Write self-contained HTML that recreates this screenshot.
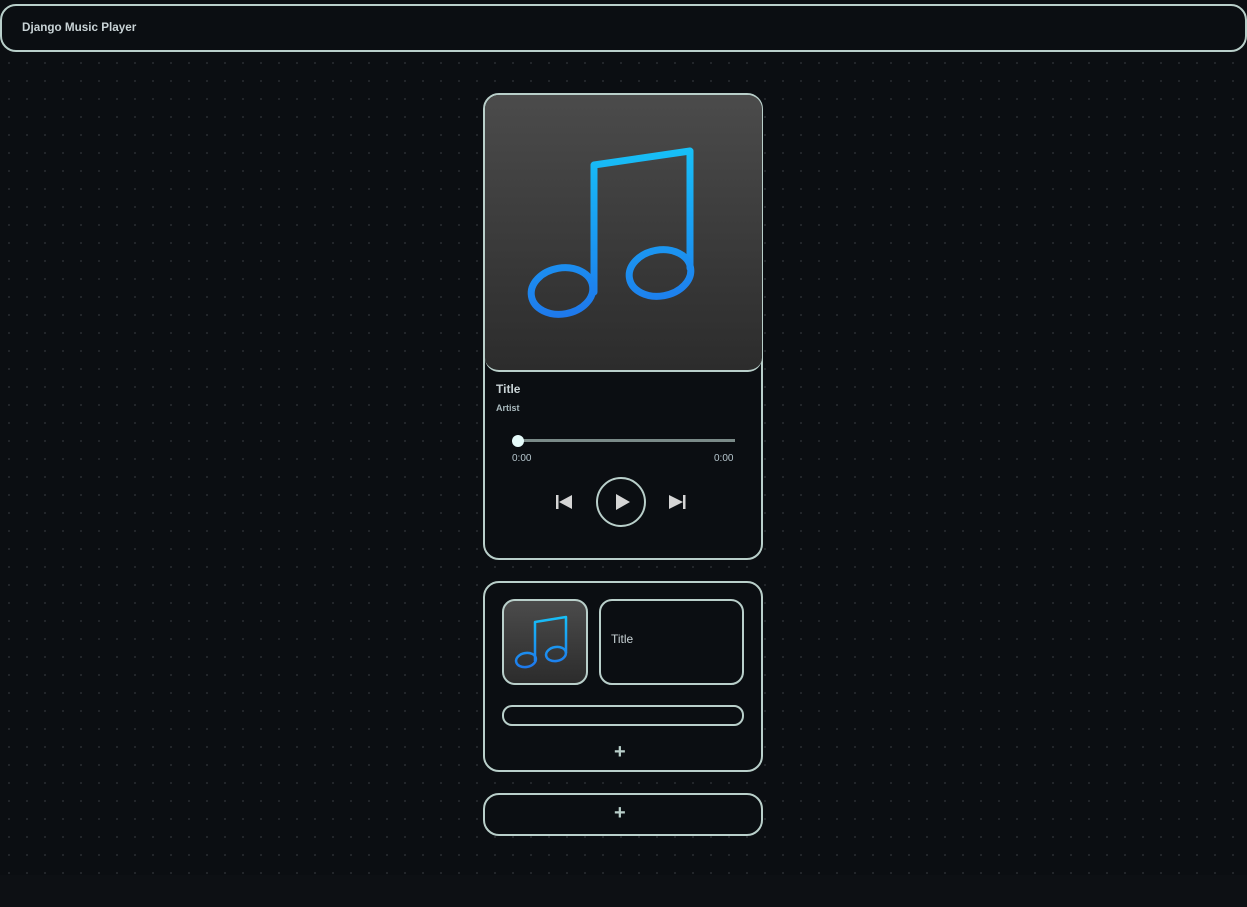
<!DOCTYPE html>
<html><head><style>
*{box-sizing:border-box;margin:0;padding:0}
body{width:1247px;height:907px;background:#0d1014;font-family:"Liberation Sans",sans-serif;position:relative;overflow:hidden}
.bg{position:absolute;left:0;top:0;width:1247px;height:875px;background-color:#0b0e12;background-image:radial-gradient(circle,#262a2e 0.8px,transparent 1.2px);background-size:18px 18px;background-position:0 0}
.b{position:absolute;border:2px solid #b9cfca;border-radius:16px;background:#0b0e12}
.t{position:absolute;color:#c9d3d6;font-weight:bold}
</style></head><body>
<div class="bg"></div>
<div class="b" style="left:0;top:4px;width:1247px;height:48px;border-radius:16px"></div>
<div class="t" style="left:22px;top:21px;font-size:11.7px">Django Music Player</div>

<div class="b" style="left:483px;top:93px;width:280px;height:467px"></div>
<div style="position:absolute;left:485px;top:95px;width:277px;height:277px;border-radius:14px;border-bottom:2px solid #b9cfca;background:linear-gradient(#4b4b4b,#2c2c2c);overflow:hidden">
<svg width="277" height="277" viewBox="485 95 277 277" style="position:absolute;left:0;top:0">
<defs><linearGradient id="g" gradientUnits="userSpaceOnUse" x1="0" y1="148" x2="0" y2="318"><stop offset="0" stop-color="#17c0f7"/><stop offset="1" stop-color="#1e78ec"/></linearGradient></defs>
<g fill="none" stroke="url(#g)" stroke-width="7" stroke-linejoin="round" stroke-linecap="round">
<path d="M594 292 V165 L690 151 V268"/>
<ellipse cx="562" cy="291" rx="31" ry="23" transform="rotate(-10 562 291)"/>
<ellipse cx="660" cy="273" rx="31" ry="23" transform="rotate(-10 660 273)"/>
</g></svg></div>
<div class="t" style="left:496px;top:382px;font-size:12px">Title</div>
<div class="t" style="left:496px;top:403px;font-size:9px;color:#a9b9bd">Artist</div>
<div style="position:absolute;left:517px;top:439px;width:218px;height:3px;background:#7a8a88"></div>
<div style="position:absolute;left:512px;top:435px;width:12px;height:12px;border-radius:50%;background:#e6fbfa"></div>
<div class="t" style="left:512px;top:453px;font-size:10px;font-weight:normal;color:#b5c5cc">0:00</div>
<div class="t" style="left:714px;top:453px;font-size:10px;font-weight:normal;color:#b5c5cc">0:00</div>
<svg style="position:absolute;left:550px;top:476px" width="150" height="52" viewBox="550 476 150 52">
<rect x="556" y="495" width="2.5" height="14" fill="#d5d5d5"/><path d="M559 502 L572 495 V509Z" fill="#d5d5d5"/>
<circle cx="621" cy="502" r="24" fill="none" stroke="#b9cfca" stroke-width="2"/>
<path d="M616 494 L630 502 L616 510Z" fill="#d5d5d5"/>
<rect x="683" y="495" width="2.5" height="14" fill="#d5d5d5"/><path d="M669 495 L683 502 L669 509Z" fill="#d5d5d5"/>
</svg>

<div class="b" style="left:483px;top:581px;width:280px;height:191px"></div>
<div style="position:absolute;left:502px;top:599px;width:86px;height:86px;border:2px solid #b9cfca;border-radius:13px;background:linear-gradient(#4b4b4b,#2c2c2c)">
<svg width="82" height="82" viewBox="504 601 82 82" style="position:absolute;left:0;top:0">
<defs><linearGradient id="g2" gradientUnits="userSpaceOnUse" x1="0" y1="616" x2="0" y2="668"><stop offset="0" stop-color="#17c0f7"/><stop offset="1" stop-color="#1e78ec"/></linearGradient></defs>
<g fill="none" stroke="url(#g2)" stroke-width="2.5" stroke-linejoin="round">
<path d="M535 661 V622 L566 617 V653"/>
<ellipse cx="526" cy="660" rx="10" ry="7" transform="rotate(-10 526 660)"/>
<ellipse cx="556" cy="654" rx="10" ry="7" transform="rotate(-10 556 654)"/>
</g></svg></div>
<div class="b" style="left:599px;top:599px;width:145px;height:86px;border-radius:13px"></div>
<div class="t" style="left:611px;top:632px;font-size:12px;font-weight:normal;color:#c9d3d6">Title</div>
<div class="b" style="left:502px;top:705px;width:242px;height:21px;border-radius:10px"></div>
<div class="t" style="left:614px;top:741px;font-size:20px;color:#b9cfca">+</div>

<div class="b" style="left:483px;top:793px;width:280px;height:43px"></div>
<div class="t" style="left:614px;top:802px;font-size:20px;color:#b9cfca">+</div>
</body></html>
